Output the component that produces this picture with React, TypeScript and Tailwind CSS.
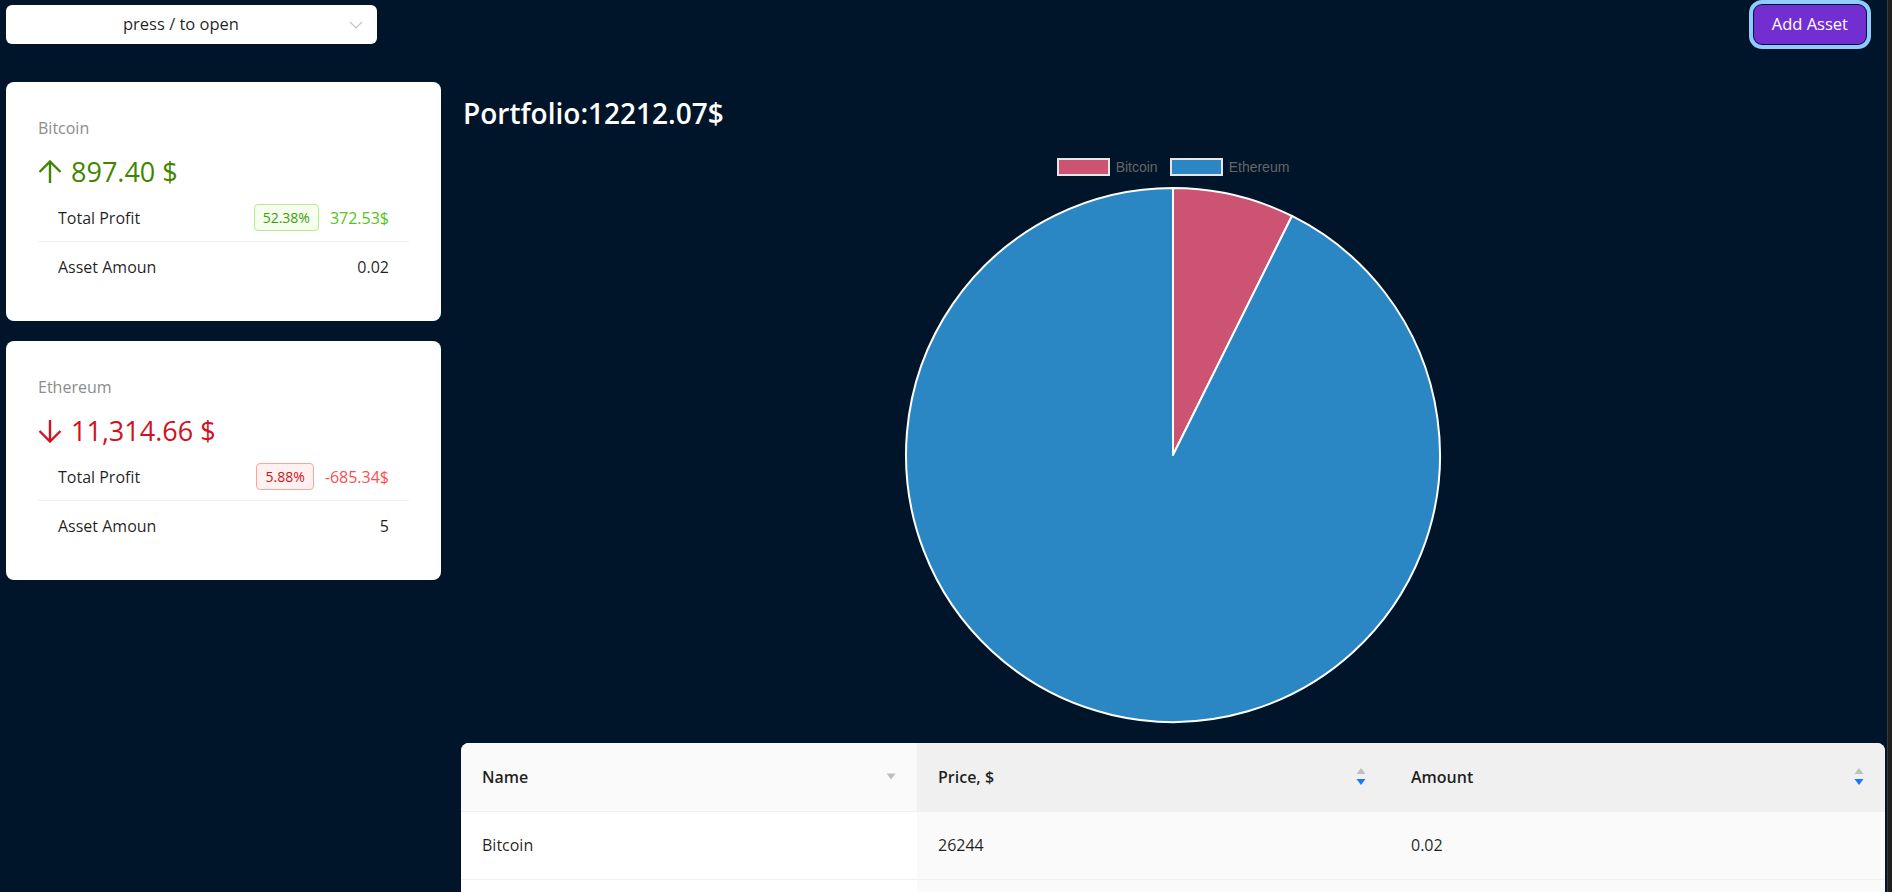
import React from 'react';

const assets = [
  {
    name: 'Bitcoin',
    value: '897.40',
    up: true,
    percent: '52.38%',
    profit: '372.53$',
    amount: '0.02',
    price: '26244',
  },
  {
    name: 'Ethereum',
    value: '11,314.66',
    up: false,
    percent: '5.88%',
    profit: '-685.34$',
    amount: '5',
    price: '2262.93',
  },
];

function Arrow({ up }: { up: boolean }) {
  // ant-style thin arrow, head is a wide chevron
  return (
    <svg width="24" height="24" viewBox="0 0 24 24" className={'mr-[9px] ' + (up ? '' : 'rotate-180')}>
      <path d="M12 1.5 V23 M1.5 12 L12 1.5 L22.5 12" fill="none" stroke="currentColor" strokeWidth="2.4" />
    </svg>
  );
}

function AssetCard({ a }: { a: (typeof assets)[number] }) {
  return (
    <div className="bg-white rounded-lg px-8 pt-8 pb-[30px]">
      <div className="mt-[3px] text-[16px] leading-[22px] text-[#8c8c8c]">{a.name}</div>
      <div
        className={
          'mt-[15px] flex items-center h-[36px] text-[27px] leading-[36px] ' +
          (a.up ? 'text-[#3f8600]' : 'text-[#cf1322]')
        }
      >
        <Arrow up={a.up} />
        <span>{a.value} $</span>
      </div>
      <div className="mt-[4px]">
        <div className="h-[48px] flex items-center justify-between px-5 border-b border-[#f0f0f0] text-[16px] text-[#000000e0]">
          <span>Total Profit</span>
          <div className="flex items-center gap-[11px]">
            <span
              className={
                'h-[27px] px-[8px] flex items-center rounded border text-[14px] ' +
                (a.up
                  ? 'bg-[#f6ffed] border-[#b7eb8f] text-[#389e0d]'
                  : 'bg-[#fff1f0] border-[#ffa39e] text-[#cf1322]')
              }
            >
              {a.percent}
            </span>
            <span className={a.up ? 'text-[#52c41a]' : 'text-[#ff4d4f]'}>{a.profit}</span>
          </div>
        </div>
        <div className="h-[49px] flex items-center justify-between px-5 text-[16px] text-[#000000e0]">
          <span>Asset Amoun</span>
          <span>{a.amount}</span>
        </div>
      </div>
    </div>
  );
}

function SortIcon({ onlyDown }: { onlyDown?: boolean }) {
  if (onlyDown) {
    return (
      <svg width="10" height="7" viewBox="0 0 10 7">
        <polygon points="0.5,0.5 9.5,0.5 5,6.5" fill="#bfbfbf" />
      </svg>
    );
  }
  return (
    <svg width="10" height="17" viewBox="0 0 10 17">
      <polygon points="0.5,6 5,0 9.5,6" fill="#bfbfbf" />
      <polygon points="0.5,11 9.5,11 5,17" fill="#1677ff" />
    </svg>
  );
}

function PieChart() {
  const total = 897.4 + 11314.66;
  const theta = (897.4 / total) * Math.PI * 2;
  const c = 270;
  const r = 267;
  const ex = c + r * Math.sin(theta);
  const ey = c - r * Math.cos(theta);
  return (
    <svg width="540" height="540" viewBox="0 0 540 540" className="mx-auto mt-[9px] block">
      <path
        d={`M${c} ${c} L${c} ${c - r} A${r} ${r} 0 0 1 ${ex} ${ey} Z`}
        fill="#cc5372"
        stroke="#ffffff"
        strokeWidth="2"
        strokeLinejoin="round"
      />
      <path
        d={`M${c} ${c} L${ex} ${ey} A${r} ${r} 0 1 1 ${c} ${c - r} Z`}
        fill="#2b86c4"
        stroke="#ffffff"
        strokeWidth="2"
        strokeLinejoin="round"
      />
    </svg>
  );
}

export default function App() {
  return (
    <div className="h-screen w-full overflow-hidden bg-[#001529] flex font-['Open_Sans',sans-serif]">
      <div className="flex-1 min-w-0 flex flex-col">
        {/* top bar */}
        <header className="flex justify-between items-start pl-[6px] pr-[21px] pt-[5px]">
          <div className="w-[371px] h-[39px] bg-white rounded-md flex items-center pl-[11px] pr-[14px]">
            <span className="flex-1 text-center text-[16.5px] text-[#000000e0] pr-[4px]">press / to open</span>
            <svg width="14" height="8" viewBox="0 0 14 8" className="shrink-0">
              <path d="M1 1 L7 7 L13 1" fill="none" stroke="#c4c4c4" strokeWidth="1.2" />
            </svg>
          </div>
          <button className="h-[39px] px-[18px] rounded-lg bg-[#722ed1] text-white text-[16.5px] outline-4 outline-solid outline-[#91caff] outline-offset-1">
            Add Asset
          </button>
        </header>

        <div className="flex gap-[20px] pl-[6px] pr-[2px] mt-[38px] min-h-0 flex-1">
          {/* asset cards */}
          <div className="w-[435px] shrink-0 flex flex-col gap-[20px]">
            {assets.map((a) => (
              <AssetCard key={a.name} a={a} />
            ))}
          </div>

          {/* portfolio */}
          <main className="flex-1 min-w-0">
            <h2 className="pl-[2px] mt-[12px] text-[28px] leading-[38px] font-semibold text-white">
              Portfolio:12212.07$
            </h2>

            <div className="mt-[26px] h-[18px] flex justify-center items-center font-['Liberation_Sans',sans-serif] text-[14px] text-[#666666]">
              <span className="w-[53px] h-[18px] bg-[#cc5372] border-2 border-[#e6e6e6]" />
              <span className="ml-[6px]">Bitcoin</span>
              <span className="ml-[12px] w-[53px] h-[18px] bg-[#2b86c4] border-2 border-[#e6e6e6]" />
              <span className="ml-[6px]">Ethereum</span>
            </div>

            <PieChart />

            <div className="mt-[18px] rounded-t-lg overflow-hidden bg-white">
              <table className="w-full table-fixed border-collapse text-[16px] text-[#000000e0]">
                <colgroup>
                  <col className="w-[456px]" />
                  <col className="w-[473px]" />
                  <col />
                </colgroup>
                <thead>
                  <tr className="h-[68px] border-b border-[#f0f0f0]">
                    <th className="bg-[#fafafa] px-[21px] text-left font-semibold">
                      <div className="flex items-center justify-between">
                        <span>Name</span>
                        <SortIcon onlyDown />
                      </div>
                    </th>
                    <th className="bg-[#f0f0f0] pl-[21px] pr-[24px] text-left font-semibold">
                      <div className="flex items-center justify-between">
                        <span>Price, $</span>
                        <SortIcon />
                      </div>
                    </th>
                    <th className="bg-[#f0f0f0] pl-[21px] pr-[21px] text-left font-semibold">
                      <div className="flex items-center justify-between">
                        <span>Amount</span>
                        <SortIcon />
                      </div>
                    </th>
                  </tr>
                </thead>
                <tbody>
                  {assets.map((a) => (
                    <tr key={a.name} className="h-[68px] border-b border-[#f0f0f0]">
                      <td className="bg-white px-[21px]">{a.name}</td>
                      <td className="bg-[#fafafa] px-[21px]">{a.price}</td>
                      <td className="bg-[#fafafa] px-[21px]">{a.amount}</td>
                    </tr>
                  ))}
                </tbody>
              </table>
            </div>
          </main>
        </div>
      </div>
      <div className="w-[5px] shrink-0 bg-[#1e1e1e] border-l border-[#3a3a3a]" />
    </div>
  );
}
